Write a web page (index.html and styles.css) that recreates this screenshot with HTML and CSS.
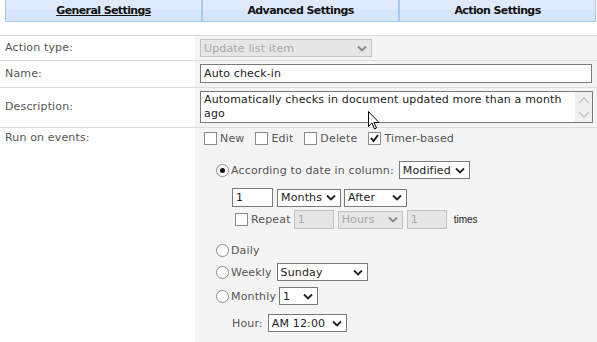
FILE: index.html
```html
<!DOCTYPE html>
<html lang="en">
<head>
    <meta charset="UTF-8">
    <title>Action Settings</title>
    <link rel="stylesheet" href="styles.css">
</head>
<body>
    <nav class="tabs">
        <div class="tab active">General Settings</div>
        <div class="tab">Advanced Settings</div>
        <div class="tab">Action Settings</div>
    </nav>

    <table class="form">
        <tr class="row1">
            <td class="lbl">Action type:</td>
            <td class="val">
                <div class="sel off w-type"><span>Update list item</span><svg viewBox="0 0 10 6"><path d="M1 1 L5 5 L9 1"/></svg></div>
            </td>
        </tr>
        <tr class="row2">
            <td class="lbl">Name:</td>
            <td class="val"><div class="txt w-name">Auto check-in</div></td>
        </tr>
        <tr class="row3">
            <td class="lbl">Description:</td>
            <td class="val">
                <div class="area">
                    <div class="area-text">Automatically checks in document updated more than a month ago</div>
                    <div class="scroll">
                        <svg viewBox="0 0 12 8"><path d="M1 7 L6 2 L11 7"/></svg>
                        <svg viewBox="0 0 12 8"><path d="M1 1 L6 6 L11 1"/></svg>
                    </div>
                </div>
            </td>
        </tr>
        <tr class="row4">
            <td class="lbl">Run on events:</td>
            <td class="val">
                <div class="events">
                    <label class="opt"><span class="box"></span>New</label>
                    <label class="opt"><span class="box"></span>Edit</label>
                    <label class="opt"><span class="box"></span>Delete</label>
                    <label class="opt"><span class="box on"><svg viewBox="0 0 9 9"><path d="M1 4 L3.5 7 L8 1"/></svg></span>Timer-based</label>
                </div>

                <div class="timer">
                    <div class="line l-col">
                        <span class="radio on"></span>According to date in column:
                        <div class="sel w-mod"><span>Modified</span><svg viewBox="0 0 10 6"><path d="M1 1 L5 5 L9 1"/></svg></div>
                    </div>
                    <div class="sub">
                        <div class="line l-num">
                            <div class="txt w-num">1</div>
                            <div class="sel w-months"><span>Months</span><svg viewBox="0 0 10 6"><path d="M1 1 L5 5 L9 1"/></svg></div>
                            <div class="sel w-after"><span>After</span><svg viewBox="0 0 10 6"><path d="M1 1 L5 5 L9 1"/></svg></div>
                        </div>
                        <div class="line l-rep">
                            <span class="box"></span><span class="rep">Repeat</span>
                            <div class="txt off w-num2">1</div>
                            <div class="sel off w-hours"><span>Hours</span><svg viewBox="0 0 10 6"><path d="M1 1 L5 5 L9 1"/></svg></div>
                            <div class="txt off w-num2">1</div>
                            <span class="times">times</span>
                        </div>
                    </div>
                    <div class="line l-daily"><span class="radio"></span>Daily</div>
                    <div class="line l-week">
                        <span class="radio"></span>Weekly
                        <div class="sel w-week"><span>Sunday</span><svg viewBox="0 0 10 6"><path d="M1 1 L5 5 L9 1"/></svg></div>
                    </div>
                    <div class="line l-month">
                        <span class="radio"></span>Monthly
                        <div class="sel w-day"><span>1</span><svg viewBox="0 0 10 6"><path d="M1 1 L5 5 L9 1"/></svg></div>
                    </div>
                    <div class="line l-hour">
                        <span class="hour">Hour:</span>
                        <div class="sel w-hour"><span>AM 12:00</span><svg viewBox="0 0 10 6"><path d="M1 1 L5 5 L9 1"/></svg></div>
                    </div>
                </div>
            </td>
        </tr>
    </table>

    <svg class="cursor" viewBox="0 0 12 19" width="12" height="19">
        <path d="M0.5 0.5 L0.5 15.5 L4 12 L6.5 18 L8.5 17 L6 11.5 L11 11.5 Z"/>
    </svg>
</body>
</html>
```

FILE: styles.css
```css
*{
    margin: 0;
    padding: 0;
    box-sizing: border-box;
}
body{
    background-color: white;
    font-family: "DejaVu Sans", Verdana, sans-serif;
    font-size: 11px;
    letter-spacing: 0.15px;
    color: #555;
    position: relative;
    height: 342px;
    overflow: hidden;
}
.tabs{
    display: flex;
    margin-left: 5px;
    width: 591px;
    height: 22px;
    border: 1px solid #a9c9f2;
    border-top: none;
    background: linear-gradient(#dfebfc 50%, #d5e5fb 50%);
}
.tab{
    flex: 1;
    text-align: center;
    font-weight: bold;
    letter-spacing: -0.6px;
    color: #111;
    line-height: 21px;
    border-left: 2px solid #a9c9f2;
}
.tab:first-child{
    border-left: none;
}
.tab.active{
    text-decoration: underline;
}
.form{
    margin-top: 13px;
    width: 597px;
    border-collapse: collapse;
}
.form td{
    border-top: 1px solid #dcdcdc;
    vertical-align: top;
}
.lbl{
    width: 195px;
    padding-left: 5px;
    background-color: #fff;
}
.val{
    background-color: #f4f4f4;
    padding-left: 5px;
}
.row1 td{ height: 25px; }
.row1 .lbl{ padding-top: 5px; }
.row1 .val{ padding-top: 3px; }
.row2 td{ height: 27px; }
.row2 .lbl{ padding-top: 6px; }
.row2 .val{ padding-top: 3px; }
.row3 td{ height: 40px; }
.row3 .lbl{ padding-top: 12px; }
.row3 .val{ padding-top: 3px; }
.row4 td{ height: 220px; }
.row4 .lbl{ padding-top: 3px; }
.row4 .val{ padding-top: 4px; }

/* controls */
.sel{
    display: inline-flex;
    align-items: center;
    justify-content: space-between;
    height: 18px;
    border: 1px solid #7a7a7a;
    background-color: #fff;
    color: #222;
    padding: 0 4px 0 3px;
    vertical-align: middle;
}
.sel svg{
    width: 10px;
    height: 7px;
    fill: none;
    stroke: #222;
    stroke-width: 1.8;
}
.sel.off{
    background-color: #e6e6e6;
    border-color: #c2c2c2;
    color: #a8a8a8;
}
.sel.off svg{
    stroke: #8a8a8a;
}
.txt{
    display: inline-block;
    height: 19px;
    border: 1px solid #7a7a7a;
    background-color: #fff;
    color: #222;
    padding: 2px 3px;
    vertical-align: middle;
}
.txt.off{
    background-color: #e6e6e6;
    border-color: #c2c2c2;
    color: #a8a8a8;
}
.w-type{ width: 172px; }
.w-name{ width: 392px; }
.w-mod{ width: 71px; margin-left: 5px; }
.w-num{ width: 41px; }
.w-months{ width: 64px; margin-left: 4px; }
.w-after{ width: 63px; margin-left: 3px; }
.w-num2{ width: 40px; height: 19px; }
.w-hours{ width: 65px; margin-left: 3px; }
.w-week{ width: 91px; margin-left: 5px; }
.w-day{ width: 39px; margin-left: 3px; }
.w-hour{ width: 79px; margin-left: 5px; }

.area{
    display: flex;
    width: 393px;
    height: 32px;
    border: 1px solid #7a7a7a;
    background-color: #fff;
}
.area-text{
    flex: 1;
    color: #222;
    padding: 1px 3px;
    line-height: 14px;
}
.scroll{
    width: 17px;
    background-color: #f0f0f0;
    display: flex;
    flex-direction: column;
    justify-content: space-around;
    align-items: center;
}
.scroll svg{
    width: 12px;
    height: 8px;
    fill: none;
    stroke: #c8c8c8;
    stroke-width: 1.6;
}

.box{
    display: inline-flex;
    align-items: center;
    justify-content: center;
    width: 13px;
    height: 13px;
    border: 1px solid #8a8a8a;
    background-color: #fff;
    margin-right: 3px;
}
.box svg{
    width: 9px;
    height: 9px;
    fill: none;
    stroke: #111;
    stroke-width: 1.8;
}
.radio{
    display: inline-block;
    width: 13px;
    height: 13px;
    border: 1px solid #8a8a8a;
    border-radius: 50%;
    background-color: #fff;
    margin-right: 2px;
    position: relative;
    vertical-align: middle;
}
.radio.on::after{
    content: "";
    position: absolute;
    left: 3px;
    top: 3px;
    width: 5px;
    height: 5px;
    border-radius: 50%;
    background-color: #111;
}

.events{
    display: flex;
    align-items: center;
    padding-left: 4px;
    height: 13px;
}
.opt{
    display: inline-flex;
    align-items: center;
    margin-right: 11px;
}
.timer{
    padding-left: 16px;
}
.line{
    display: flex;
    align-items: center;
}
.l-col{ margin-top: 16px; }
.sub{ padding-left: 16px; }
.l-num{ margin-top: 9px; }
.l-rep{ margin-top: 3px; }
.l-rep .box{ margin-left: 3px; }
.rep{ margin-right: 3px; }
.l-rep .txt + .sel, .l-rep .sel + .txt{ margin-left: 4px; }
.times{
    font-family: "Liberation Sans", Arial, sans-serif;
    font-size: 10px;
    letter-spacing: 0;
    color: #222;
    margin-left: 7px;
}
.l-daily{ margin-top: 15px; }
.l-week{ margin-top: 6px; }
.l-month{ margin-top: 6px; }
.l-hour{ margin-top: 9px; padding-left: 16px; }

.cursor{
    position: absolute;
    left: 368px;
    top: 111px;
    fill: #fff;
    stroke: #000;
    stroke-width: 1;
}
```
